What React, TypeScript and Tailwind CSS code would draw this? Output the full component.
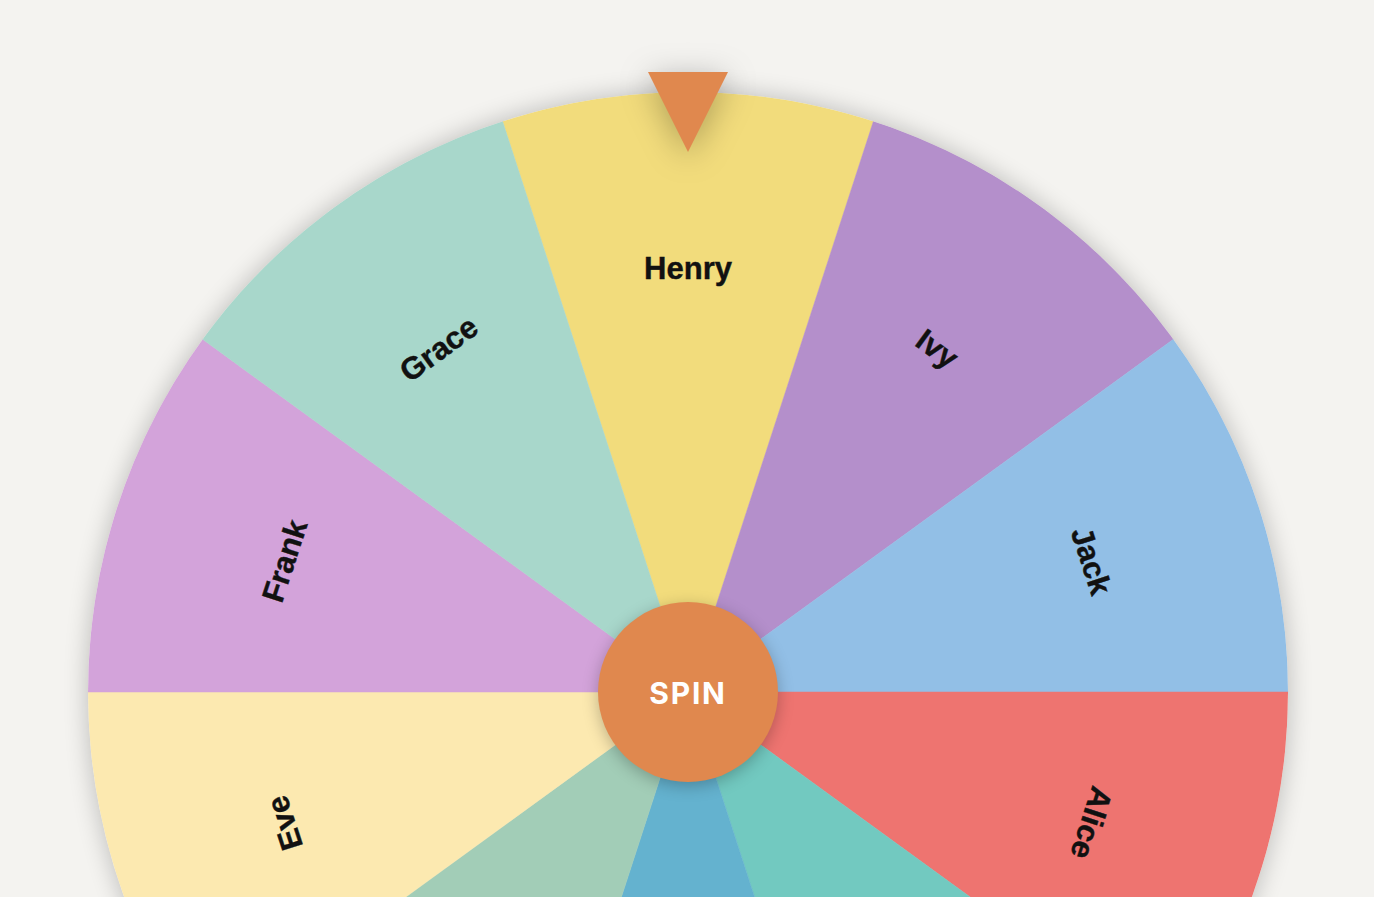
import React from "react";

const segments = [
  { name: "Henry", color: "#f2dc7c" },
  { name: "Ivy", color: "#b48fcb" },
  { name: "Jack", color: "#92bfe6" },
  { name: "Alice", color: "#ee7470" },
  { name: "Bob", color: "#72c9c0" },
  { name: "Charlie", color: "#64b2cf" },
  { name: "David", color: "#a2cdb7" },
  { name: "Eve", color: "#fce9b0" },
  { name: "Frank", color: "#d3a3da" },
  { name: "Grace", color: "#a8d7cb" },
];

const R = 600;
const C = 600;

function pt(angleDeg: number, r: number) {
  const a = (angleDeg * Math.PI) / 180;
  return [C + r * Math.sin(a), C - r * Math.cos(a)];
}

function Wheel() {
  const n = segments.length;
  const step = 360 / n;
  return (
    <svg width={1200} height={1200} viewBox="0 0 1200 1200" className="block">
      {segments.map((s, i) => {
        const mid = i * step;
        const [x1, y1] = pt(mid - step / 2, R);
        const [x2, y2] = pt(mid + step / 2, R);
        const d = `M ${C} ${C} L ${x1} ${y1} A ${R} ${R} 0 0 1 ${x2} ${y2} Z`;
        return <path key={s.name} d={d} fill={s.color} stroke={s.color} strokeWidth={0.5} />;
      })}
      {segments.map((s, i) => {
        const mid = i * step;
        const [tx, ty] = pt(mid, 424);
        return (
          <text
            key={s.name + "t"}
            x={tx}
            y={ty}
            textAnchor="middle"
            dominantBaseline="central"
            transform={`rotate(${mid} ${tx} ${ty})`}
            fill="#111111"
            stroke="#111111"
            strokeWidth={0.4}
            style={{ fontFamily: '"Liberation Sans", Arial, sans-serif', fontWeight: 700, fontSize: 31 }}
          >
            {s.name}
          </text>
        );
      })}
    </svg>
  );
}

export default function App() {
  return (
    <div className="min-h-screen w-full bg-[#f4f3f0] flex justify-center pt-[92px] pl-[2px] overflow-hidden">
      <div className="relative w-[1200px] h-[1200px] shrink-0">
        <div className="rounded-full overflow-hidden shadow-[0_0_24px_rgba(0,0,0,0.24)]">
          <Wheel />
        </div>
        <div className="absolute left-1/2 -translate-x-1/2 top-[-20px] w-[80px] h-[80px] drop-shadow-[0_6px_16px_rgba(0,0,0,0.28)]">
          <svg width={80} height={80} viewBox="0 0 80 80" className="block">
            <polygon points="0,0 80,0 40,80" fill="#e0884e" />
          </svg>
        </div>
        <button className="absolute left-1/2 top-1/2 -translate-x-1/2 -translate-y-1/2 w-[180px] h-[180px] rounded-full bg-[#e0884e] shadow-[0_4px_16px_rgba(0,0,0,0.25)] flex items-center justify-center pt-[2px] text-white text-[30px] font-bold tracking-[0.06em] font-['Inter','Liberation_Sans',sans-serif]">
          SPIN
        </button>
      </div>
    </div>
  );
}
